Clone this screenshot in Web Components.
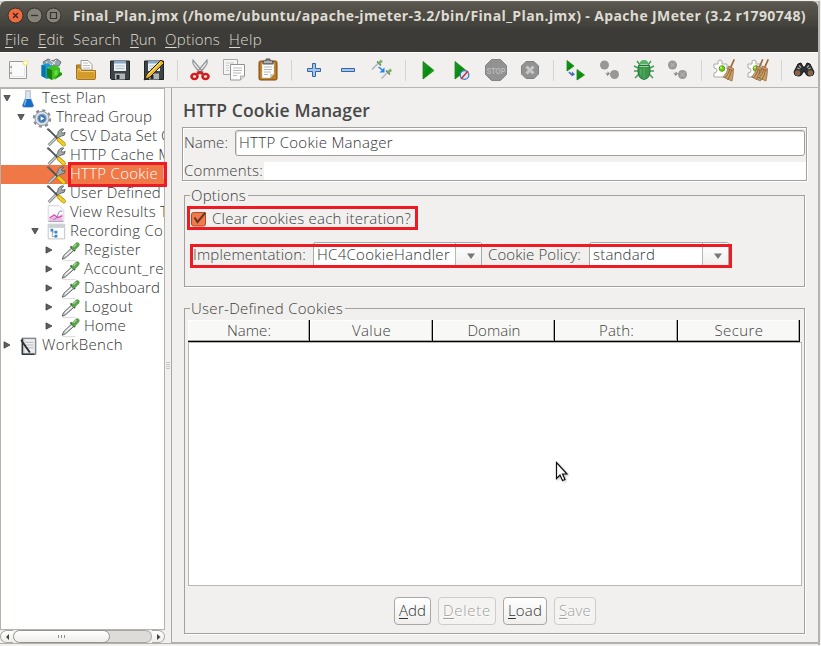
<!DOCTYPE html>
<html lang="en">
<head>
<meta charset="utf-8">
<title>Apache JMeter</title>
<style>
html,body{margin:0;padding:0;width:821px;height:646px;overflow:hidden;background:#f2f1f0}
body{font-family:"Open Sans","Noto Sans",sans-serif;font-size:15px;font-weight:360;color:#404040}
</style>
</head>
<body>
<jmeter-window></jmeter-window>
<script>
const define=(name,html,setup)=>customElements.define(name,class extends HTMLElement{
  connectedCallback(){
    if(this.shadowRoot)return;
    this.attachShadow({mode:'open'}).innerHTML=typeof html==='function'?html(this):html;
    if(setup)setup(this);
  }
});

/* Text whose letter spacing is tuned so that the sample occupies a given width. */
define('fit-text','<style>:host{display:inline-block;white-space:pre;line-height:20px}::slotted(u){text-decoration-thickness:1px;text-underline-offset:2px}</style><slot></slot>',el=>{
  const s=getComputedStyle(el),c=document.createElement('canvas').getContext('2d');
  c.font=`${s.fontWeight} ${s.fontSize} ${s.fontFamily}`;
  const t=el.getAttribute('of')||el.textContent;
  el.style.letterSpacing=((+el.getAttribute('w')-c.measureText(t).width)/t.length).toFixed(3)+'px';
});

const floppy='<path d="M2.500 3h19v18.500h-18l-1-1z" fill="#3d4448" stroke="#1f2427"/><path d="M6 3h12v10H6z" fill="#e9f0f6"/><path d="M6 3h12v2.500H6z" fill="#87aacb"/><path d="M7.500 8h9M7.500 10.500h9" stroke="#b3bdc6"/><path d="M7 15.500h10v6H7z" fill="#aeb3b5"/><path d="M8.500 17h3v4h-3z" fill="#262a2c"/>';
const broom='<path d="M21.500 1l1.500.7-4 9-1.500-.8z" fill="#9e6b38"/><path d="M16.500 8l5 2.500q0 6-1.500 12.500l-9-4q4.500-4 5.500-11z" fill="#c9a06a" stroke="#8c6436" stroke-width=".7"/><path d="M18 11q-2 6-5 9M19.500 12q-1 6-4 10" stroke="#805a2e" stroke-width=".8" fill="none"/><path d="M15.700 10.500l5 2" stroke="#a6583c" stroke-width="1"/>';
const cog='<path d="M2 6h4q-1-4 2-4t2 4h5v5q4-1 4 2t-4 2v4H2v-4q3 0 3-2.500T2 10z" fill="#fff" stroke="#aaa" stroke-width="1"/><circle cx="10" cy="10.500" r="2.800" fill="#73cd18" stroke="#519b10"/><circle cx="9" cy="9.500" r="1" fill="#caff7a"/>';
const arrow='<path d="M5 14q1.500 2.500 4 2.500" stroke="#4b82c3" stroke-width="1.800" fill="none"/><path d="M8 13.500l3 3-3.500 2z" fill="#3971b7"/>';
const icons={
new:'<path d="M3.500 3.500h17v17h-17z" fill="#fafafa" stroke="#999"/><path d="M5.500 6v12.500h13V9" fill="none" stroke="#e6e6e6"/><path d="M5 8v2M5 14v2" stroke="#777"/><circle cx="19.500" cy="5" r="2.800" fill="#f5e983"/><circle cx="19.500" cy="5" r="1.400" fill="#fff"/>',
templates:'<path d="M3 4l5-3 4 2 5-2 4 3-2 4H5z" fill="#98a4ab" stroke="#68747b"/><path d="M6 4l5 3M10 2l5 4M16 2l-4 5" stroke="#e7edf0"/><path d="M1.500 7l7-2 3 3v12l-5 1-5-3z" fill="#1b99d3"/><path d="M1.500 7l4 1v12l-4-2z" fill="#0874a9"/><path d="M7 10l2-1v4l-2 1z" fill="#c8ecff"/><path d="M7 10l8-3 5 3v8l-8 4-5-3z" fill="#3fbd25"/><path d="M7 10l5 2v10l-5-3z" fill="#16830c"/><path d="M14.500 13l3-1v5l-3 1z" fill="#6be03c"/><path d="M20 14l2 1v2l-8 5z" fill="#219414"/>',
open:'<path d="M2.500 10V7h5l2 3" fill="#ca8f20" stroke="#9c6a12"/><path d="M7 2.500h7l4 4V12H7z" fill="#fff" stroke="#999"/><path d="M9 5h5M9 7.500h7M9 10h7" stroke="#bbb"/><path d="M2.500 10h4l1 2.500h14v8q0 1-1.500 1H4q-1.500 0-1.500-1.500z" fill="#dba63e" stroke="#a5741d"/><path d="M4 14h16v6H4z" fill="#d39a2c"/><path d="M4 11h2l1 2.500h13v1" fill="none" stroke="#f5cb70"/>',
save:floppy,
saveas:floppy+'<path d="M19 2l3 3L8 19l-6 3 3-6z" fill="#e9b52e" stroke="#33270b"/><path d="M18 5L6 17" stroke="#fae288"/><path d="M2 22l1.500-3 1.500 1.500z" fill="#222"/>',
cut:'<path d="M5 2Q4 6 8 10l5 6 2-2zM19 2q1 4-3 8l-5 6-2-2z" fill="#e8e9e8" stroke="#92979a" stroke-width="1.200"/><ellipse cx="6.500" cy="18.500" rx="3" ry="2.500" fill="none" stroke="#d51c1c" stroke-width="2.600"/><ellipse cx="17.500" cy="18.500" rx="3" ry="2.500" fill="none" stroke="#d51c1c" stroke-width="2.600"/><path d="M9 16l3-2 3 2" stroke="#d51c1c" stroke-width="2.500" fill="none"/>',
copy:'<g stroke="#aaa"><path d="M1.500 1.500h14v15h-14z" fill="#f5f5f4"/><path d="M4 5h8M4 7.500h3M4 10h3M4 12.500h3" stroke="#c8c8c8"/><path d="M8.500 6.500h14v11.500l-4 4h-10z" fill="#fff" stroke="#939393"/><path d="M11 10h9M11 12.500h9M11 15h8M11 17.500h4" stroke="#bbb"/><path d="M18.500 22v-4h4" fill="#ddd"/></g>',
paste:'<rect x="3" y="3" width="18" height="19" rx="1.500" fill="#bd7d1e" stroke="#78480c"/><path d="M6 5h12v11l-4 4H6z" fill="#fff" stroke="#bbb" stroke-width=".6"/><path d="M8 9h8M8 11.500h8M8 14h7M8 16.500h4" stroke="#b2b2b2"/><path d="M14 20v-4h4" fill="#ccc"/><path d="M7 6V3h3V1h4v2h3v3z" fill="#888" stroke="#555"/><path d="M8 4h8" stroke="#ddd"/>',
plus:'<path d="M10.500 5.500h3v5h5v3h-5v5h-3v-5h-5v-3h5z" fill="#a5c6eb" stroke="#3465a4"/>',
minus:'<path d="M5.500 10.500h13v3h-13z" fill="#a5c6eb" stroke="#3465a4"/>',
toggle:'<path d="M2 11.500l6-6" stroke="#b4b9b7" stroke-width="1.700"/><path d="M7 3.500l4 4" stroke="#4d7648" stroke-width="1.100"/><path d="M8.800 5.500l3-3" stroke="#79b46a" stroke-width="2.800"/><path d="M11.500 20.500l6-6" stroke="#b9bdbc" stroke-width="1.700"/><path d="M16 12.500l4 4" stroke="#4d7648" stroke-width="1.100"/><path d="M18.200 14.200l3-2.500" stroke="#79b36a" stroke-width="2.800"/><path d="M8.500 9l4 3" stroke="#2384ee" stroke-width="1.500"/><path d="M14.500 9.500v5H9.500z" fill="#2384ee"/>',
play:'<path d="M7 3.500L18 12.500 7 21z" fill="url(#pg)" stroke="#14850f" stroke-width=".8"/>',
playx:'<path d="M5 3.500L16 12.500 5 21z" fill="url(#pg)" stroke="#14850f" stroke-width=".8"/><circle cx="14.500" cy="17" r="4.300" fill="#d8e8fa" stroke="#397bc2" stroke-width="1.300"/><path d="M11 21l7-8" stroke="#e32424" stroke-width="1.500"/>',
stop:'<path d="M7.500 1.500h9l6 6v9l-6 6h-9l-6-6v-9z" fill="#929292" stroke="#858585"/><text x="12" y="15.600" text-anchor="middle" textLength="19" lengthAdjust="spacingAndGlyphs" font-family="Liberation Sans" font-weight="bold" font-size="9.500" fill="#bababa">STOP</text>',
shutdown:'<path d="M8 3.500h8l4.500 4.500v8L16 20.500H8L3.500 16V8z" fill="#929292" stroke="#808080"/><path d="M8.500 8.500l7 7m0-7l-7 7" stroke="#c6c6c6" stroke-width="3"/>',
rstart:'<path d="M3 2.500l7 5.500-7 5z" fill="url(#pg)" stroke="#14850f" stroke-width=".8"/><path d="M13 11.500l7.500 5.500-7.500 5z" fill="url(#pg)" stroke="#14850f" stroke-width=".8"/>'+arrow,
rstop:'<circle cx="6.500" cy="7" r="4.500" fill="#979797"/><circle cx="16.500" cy="16.500" r="4.500" fill="#979797"/><path d="M6.500 13.500q1 2 3 2v-2l2.500 2-2.500 2.500" fill="#888"/>',
bug:'<path d="M5 3l3 4M19 3l-3 4M2 8l4 2M22 8l-4 2M2 13h5M22 13h-5M3 20l4-4M21 20l-4-4" stroke="#4b995b" stroke-width="1.500"/><path d="M7.500 6.500q0-4.500 4.500-4.500t4.500 4.500z" fill="#5bb268"/><path d="M6.500 7.500h11q2.500 13-5.500 14Q4 20.500 6.500 7.500z" fill="#3c964d" stroke="#23763a"/><path d="M7.500 8.500h9" stroke="#8ed993"/><path d="M12 10v11" stroke="#65b36c" stroke-width=".8"/><path d="M9 11v6" stroke="#57a962" stroke-width="1.500"/>',
rshut:'<circle cx="6.500" cy="7" r="4.500" fill="#979797"/><circle cx="16.500" cy="16.500" r="4.500" fill="#979797"/><path d="M4.500 5l4 4m0-4l-4 4M14.500 14.500l4 4m0-4l-4 4" stroke="#b0b0b0" stroke-width="1.300"/><path d="M6.500 13.500q1 2 3 2v-2l2.500 2-2.500 2.500" fill="#888"/>',
clear:cog+broom,
clearall:cog+'<g transform="translate(-5.500)">'+broom+'</g>'+broom,
search:'<path d="M6 6l3-1 2 4h2l2-4 3 1 4 8q0 4-4 4-4.500 0-4.500-4h-3q0 4-4.500 4-4 0-4-4z" fill="#303030" stroke="#151515"/><circle cx="5.500" cy="15" r="2.300" fill="#a75a29" stroke="#777"/><circle cx="18.500" cy="15" r="2.300" fill="#a75a29" stroke="#777"/><path d="M7 7.500l2 2M17 7.500l-2 2M5 10l3 1M19 10l-3 1" stroke="#aaa" stroke-width="1.300"/>',
flask:'<path d="M9.500 3v7L6 19q0 2 2 2h8q2 0 2-2l-3.500-9V3z" fill="#dbe7f4" stroke="#a8b4c1"/><path d="M9 12h6l3 7q0 1.800-2 1.800H8q-2 0-2-1.800z" fill="#176fc5"/><path d="M10 12.500l-2 6.500" stroke="#79bcf5" stroke-width="1.500"/><path d="M9 3h6" stroke="#ccc" stroke-width="1.500"/>',
gear:'<circle cx="12" cy="12.500" r="9" fill="none" stroke="#858b91" stroke-width="2.200" stroke-dasharray="3.500 3.570"/><circle cx="12" cy="12.500" r="7.700" fill="#dfe2e5" stroke="#878d95"/><circle cx="12" cy="12.500" r="4.500" fill="#3e72b4" stroke="#7a9fc9" stroke-width="1.300"/><path d="M10.500 10l4 2.500-4 2.500z" fill="#fff"/>',
tools:'<path d="M13 12l-9 9" stroke="#666d70" stroke-width="3"/><path d="M13 12l-9 9" stroke="#ccd1d2" stroke-width="1.600"/><path d="M16 4.500q3-2.500 4.500-1l-2.500 2.500 1 2 3-1q0 4-4 4-2 0-4.500 3l-2-2q2.500-3 2.500-4 0-2.500 2-3.500z" fill="#a2a9aa" stroke="#50575a" stroke-width=".9"/><path d="M3.500 3.500l10 10" stroke="#484e50" stroke-width="1.800"/><path d="M2.500 3l3.500 3" stroke="#666" stroke-width="2.300"/><path d="M15 15l5.500 5" stroke="#9c830a" stroke-width="4.400" stroke-linecap="round"/><path d="M15 15l5.500 5" stroke="#f3ce1b" stroke-width="3.200" stroke-linecap="round"/>',
chart:'<path d="M3.500 4v17h17V9l-5-5z" fill="#fbfbfd" stroke="#d2d2dc"/><path d="M5 20v-3l5-4 4 3 5-3v7z" fill="#f2b8df"/><path d="M5 17.500l5-3.500 4 3 5-2" stroke="#da48ae" fill="none" stroke-width="1.200"/><path d="M9 19q4 0 5-5t5-4" stroke="#6682cc" fill="none"/><path d="M4 21h16" stroke="#aa78b0"/>',
recording:'<path d="M3.500 3.500h18v16h-18z" fill="#fff" stroke="#bcbdc0"/><path d="M4 4h17v3.500H4z" fill="#ccd0d5"/><path d="M8 9v8h4M8 12h4" stroke="#999" fill="none"/><path d="M6 8.500h3v3H6zM10.500 10.500h3v3h-3zM10.500 15h3v3h-3z" fill="#3685d1"/>',
dropper:'<path d="M3.500 21l1.500-4 8.500-8 2.500 2.500-9 8z" fill="#c9cecc" stroke="#555c5b"/><path d="M7 17l8-7" stroke="#fff" stroke-width="1.200"/><path d="M12.500 7l5 5" stroke="#386a30" stroke-width="2"/><path d="M16.500 8.500l3.500-3.500" stroke="#5ba24e" stroke-width="5" stroke-linecap="round"/><path d="M16 7.500l3-3" stroke="#a5dc92" stroke-width="1.500"/><path d="M4 22.500h14" stroke="#ccc" stroke-width=".8"/>',
workbench:'<path d="M5.500 3.500h15v17.500h-15z" fill="#d8dcdf" stroke="#555b5f"/><path d="M9 5h10v14H9z" fill="#eceef0"/><path d="M9 8h9M9 11h9M9 14h9" stroke="#b0b5b8"/><path d="M4.500 5.500L14 19" stroke="#252a2d" stroke-width="2"/><path d="M6 4v17h13" stroke="#303538" stroke-width="1.500"/>'
};
define('app-icon',el=>`<style>:host{display:block;flex:none;width:24px;height:24px}svg{display:block;width:100%;height:100%}</style>
<svg viewBox="0 0 24 24" fill="none"><defs><linearGradient id="pg" x2="1" y2="1"><stop stop-color="#23963a"/><stop offset=".55" stop-color="#078a0a"/><stop offset="1" stop-color="#4be92c"/></linearGradient></defs>${icons[el.getAttribute('name')]}</svg>`);

define('title-bar',`<style>:host{display:flex;align-items:center;height:27px;margin-top:1px;padding-left:7px;background:linear-gradient(#5a584f,#403f3a);border-radius:6px 6px 0 0;border-top:1px solid #6b695f;box-sizing:border-box;color:#dfdbd2;font-weight:700;font-size:14px}
svg{display:block;width:17px;height:17px;margin-right:2px;flex:none}fit-text{margin-left:9px;padding-top:1px}</style>
<svg viewBox="0 0 17 17"><circle cx="8.500" cy="8.500" r="7.500" fill="#ed6b43" stroke="#33302b"/><path d="M6 6l5 5m0-5l-5 5" stroke="#402018" stroke-width="1.400"/></svg>
<svg viewBox="0 0 17 17"><circle cx="8.500" cy="8.500" r="7.500" fill="#858279" stroke="#33302b"/><path d="M5 8.500h7" stroke="#35342f" stroke-width="1.300"/></svg>
<svg viewBox="0 0 17 17"><circle cx="8.500" cy="8.500" r="7.500" fill="#858279" stroke="#33302b"/><path d="M5.500 5.500h6v6h-6z" fill="none" stroke="#35342f" stroke-width="1.200"/></svg>
<fit-text w="733">Final_Plan.jmx (/home/ubuntu/apache-jmeter-3.2/bin/Final_Plan.jmx) - Apache JMeter (3.2 r1790748)</fit-text>`);

define('menu-bar',`<style>:host{display:flex;align-items:center;height:24px;box-sizing:border-box;background:#3c3b37;color:#dfdbd2;padding:0 0 3px 5px;gap:9px}</style>
<fit-text w="24"><u>F</u>ile</fit-text><fit-text w="26"><u>E</u>dit</fit-text><fit-text w="48">Search</fit-text><fit-text w="26"><u>R</u>un</fit-text><fit-text w="55"><u>O</u>ptions</fit-text><fit-text w="33"><u>H</u>elp</fit-text>`);

define('tool-bar',`<style>:host{display:flex;align-items:center;height:35px;padding-left:1px;box-sizing:border-box;border-top:1px solid #fff}app-icon{margin:0 5px}i{flex:none;width:1px;height:21px;margin:0 5px 0 6px;background:#d5d3d1}</style>`+
'new templates open save saveas | cut copy paste | plus minus toggle | play playx stop shutdown | rstart rstop bug rshut | clear clearall | search'.split(' ').map(n=>n==='|'?'<i></i>':`<app-icon name="${n}"></app-icon>`).join(''));

/* level: indentation depth; open: yes / no / leaf */
define('tree-row',el=>{
  const lv=+el.getAttribute('level'),o=el.getAttribute('open');
  const tri=o==='yes'?'<path d="M.8 1.500h6.400L4 7z"/>':o==='no'?'<path d="M1 .8v6.400L7 4z"/>':'';
  return `<style>:host{display:flex;align-items:center;height:19px;box-sizing:border-box;padding-left:${2+lv*14}px;color:#333}
:host([selected]){background:#f07746;color:#fff}svg{flex:none;width:8px;height:8px;margin:0 5px 2px 0}app-icon{width:22px;height:22px;margin-right:3px;margin-left:1px}::slotted(*){padding-bottom:4px}</style>
<svg viewBox="0 0 8 8" fill="#606060" stroke="#333" stroke-width=".7">${tri}</svg><app-icon name="${el.getAttribute('icon')}"></app-icon><slot></slot>`});

define('scroll-bar',`<style>:host{display:grid;grid-template-columns:13px 97px 42px 13px;height:13px;position:relative}div{box-sizing:border-box;height:13px;border:1px solid #aaa7a3;background:linear-gradient(#fff,#eeedeb)}
.l{border-radius:7px 0 0 7px;border-right:0}.r{border-radius:0 7px 7px 0;border-left:0}.t{border-radius:7px;display:flex;gap:2px;align-items:center;justify-content:center;z-index:1;border-color:#96938f}.k{background:#dedcda;border-radius:0 7px 7px 0;margin-left:-7px;border-left:0}i{width:1px;height:3px;background:#8e8e8e}svg{display:block;width:11px;height:11px}</style>
<div class="l"><svg viewBox="0 0 11 11"><path d="M8 3v6L5 6z" fill="#444"/></svg></div><div class="t"><i></i><i></i><i></i></div><div class="k"></div><div class="r"><svg viewBox="0 0 11 11"><path d="M5 3v6l3.500-3z" fill="#444"/></svg></div>`);

define('plan-tree',()=>{
  const rows=[[0,'yes','flask','Test Plan',64],[1,'yes','gear','Thread Group',96],[2,'','tools','CSV Data Set C',87,'CSV Data Set'],[2,'','tools','HTTP Cache M',84,'HTTP Cache'],[2,'','tools','HTTP Cookie M',88,'HTTP Cookie'],[2,'','tools','User Defined',91],[2,'','chart','View Results T',86,'View Results'],[2,'yes','recording','Recording Con',93,'Recording Co'],[3,'no','dropper','Register',57],[3,'no','dropper','Account_re',80],[3,'no','dropper','Dashboard',76],[3,'no','dropper','Logout',49],[3,'no','dropper','Home',42],[0,'no','workbench','WorkBench',81]];
  return `<style>:host{display:flex;flex-direction:column;width:165px}.v{height:543px;box-sizing:border-box;border:1px solid #b6b3ae;background:#fff;overflow:hidden}</style><div class="v">`+
  rows.map(r=>`<tree-row level="${r[0]}" open="${r[1]||'leaf'}" icon="${r[2]}" ${r[3].startsWith('HTTP Cookie')?'selected':''}><fit-text w="${r[4]}" of="${r[5]||r[3]}">${r[3]}</fit-text></tree-row>`).join('')+'</div><scroll-bar></scroll-bar>'});

define('group-box',`<style>:host{display:block;box-sizing:border-box}fieldset{margin:0;padding:0;border:1px solid #a3a19e;box-shadow:1px 1px #fff;box-sizing:border-box;height:100%;min-width:0}legend{height:20px;padding:0 2px 0 1px;margin-left:5px;color:#3c3c3c;font-size:15px}</style><fieldset><legend><slot name="label"></slot></legend><slot></slot></fieldset>`);

define('name-panel',`<style>:host{display:block;box-sizing:border-box;width:625px;height:54px;border:1px solid #a3a19e;box-shadow:1px 1px #fff,inset 1px 1px #fff}
div{display:flex;align-items:center}.a{height:29px}.b{height:23px}fit-text{margin-left:1px;padding-bottom:1px}.b fit-text{padding:3px 0 0}.f fit-text{padding-bottom:2px}.f{box-sizing:border-box;width:570px;height:26px;margin-left:7px;margin-top:1px;border:1px solid #a09e9b;border-radius:3px;background:#fff;padding-left:2px;box-shadow:inset 1px 1px #dedcda;color:#333}.g{align-self:flex-end;flex:1;height:18px;background:#fff;margin-left:1px}</style>
<div class="a"><fit-text w="44">Name:</fit-text><div class="f"><fit-text w="154">HTTP Cookie Manager</fit-text></div></div><div class="b"><fit-text w="79">Comments:</fit-text><div class="g"></div></div>`);

define('combo-box',el=>`<style>:host{display:grid;grid-template-columns:1fr 26px;box-sizing:border-box;height:25px;border:1px solid #aaa8a5;border-bottom:0;border-radius:3px 3px 0 0;background:#fff;color:#333;width:${el.getAttribute('width')}px}
.t{padding:1px 0 0 3px}.b{border-left:1px solid #b9b7b4;background:linear-gradient(#fff,#ededec);display:flex;align-items:center;justify-content:center}svg{width:8px;height:6px;margin-top:3px;margin-left:4px}</style><div class="t"><slot></slot></div><div class="b"><svg viewBox="0 0 8 6"><path d="M0 .5h8L4 6z" fill="#777"/></svg></div>`);

define('check-box',`<style>:host{display:flex;align-items:center;gap:5px}svg{width:16px;height:16px;margin-top:1px}</style><svg viewBox="0 0 16 16"><rect x=".5" y="1.500" width="14" height="13.500" rx="2" fill="#f07a4c" stroke="#a94d29"/><path d="M3.500 6.500l3 4.500L14.500 1.500" fill="none" stroke="#6b3522" stroke-width="2"/></svg><slot></slot>`);

define('cookie-table',()=>`<style>:host{display:block;width:614px}.h{display:grid;grid-template-columns:122px 123px 122px 123px 122px;height:22px}.h div{box-sizing:border-box;text-align:center;padding-left:1px;background:#f8f8f6;border-right:1px solid #000;border-bottom:1px solid #000;box-shadow:inset -1px -1px #aaa,inset 1px 1px #fff}.v{box-sizing:border-box;height:244px;background:#fff;border:1px solid #b8b6b3}</style><div class="h">`+
 [['Name:',44],['Value',39],['Domain',53],['Path:',35],['Secure',49]].map(r=>`<div><fit-text w="${r[1]}">${r[0]}</fit-text></div>`).join('')+'</div><div class="v"></div>');

define('push-button',el=>`<style>:host{display:flex;align-items:center;justify-content:center;box-sizing:border-box;height:28px;padding-bottom:2px;width:${el.getAttribute('width')}px;border:1px solid #aaa8a5;border-radius:4px;background:linear-gradient(#fff,#efeeed);color:#333}:host([disabled]){border-color:#cecccb;color:#a09e9b;background:#f4f3f2;text-shadow:1px 1px #fff}</style><slot></slot>`);

define('cookie-manager',`<style>:host{display:block;box-sizing:border-box;width:647px;height:556px;border-left:1px solid #aaa8a4;border-bottom:2px solid #b2b0ad;padding-left:11px}
h1{margin:0;font:600 17.500px "Open Sans",sans-serif;height:39px;padding-top:10px;box-sizing:border-box;color:#484848}
name-panel{margin-left:-1px}.o{width:621px;height:102px;margin:4px 0 0 1px}.u{width:621px;height:336px;margin:11px 0 0 1px}
check-box{margin:3px 0 0 6px;height:20px}.r{display:flex;align-items:center;margin:13px 0 0 8px;height:26px}.r combo-box{margin-left:7px}.r>fit-text{padding-bottom:1px}.r .p{margin-left:6px}.r .c{margin-left:8px}
cookie-table{margin:2px 0 0 3px}.b{display:flex;gap:7px;margin:11px 0 0 209px}</style>
<h1><fit-text w="187">HTTP Cookie Manager</fit-text></h1><name-panel></name-panel>
<group-box class="o"><fit-text slot="label" w="55">Options</fit-text><check-box><fit-text w="199">Clear cookies each iteration?</fit-text></check-box>
<div class="r"><fit-text w="113">Implementation:</fit-text><combo-box width="169"><fit-text w="133">HC4CookieHandler</fit-text></combo-box><fit-text class="p" w="93">Cookie Policy:</fit-text><combo-box class="c" width="140"><fit-text w="62">standard</fit-text></combo-box></div></group-box>
<group-box class="u"><fit-text slot="label" w="152">User-Defined Cookies</fit-text><cookie-table></cookie-table>
<div class="b"><push-button width="37"><fit-text w="27"><u>A</u>dd</fit-text></push-button><push-button width="58" disabled><fit-text w="48"><u>D</u>elete</fit-text></push-button><push-button width="44"><fit-text w="34"><u>L</u>oad</fit-text></push-button><push-button width="42" disabled><fit-text w="32"><u>S</u>ave</fit-text></push-button></div></group-box>`);

define('red-mark','<style>:host{position:absolute;box-sizing:border-box;border:3px solid #ed1c24;z-index:3}</style>');
define('mouse-pointer','<style>:host{position:absolute;left:555px;top:461px;width:14px;height:22px;z-index:3;filter:drop-shadow(1px 1px 1px #bbb)}svg{display:block}</style><svg width="14" height="22"><path d="M1.500 1.500v16l3.500-3.500 2.500 5.500 2.500-1-2.500-5.500h4.500z" fill="#fff" stroke="#111" stroke-width="1.200"/></svg>');

define('jmeter-window',`<style>:host{display:block;position:relative;width:821px;height:646px;overflow:hidden;background:#f2f1f0}
.w{width:820px;height:644px;background:#f1f0ee;border-right:2px solid #b6b4b1;box-sizing:border-box}.top{background:linear-gradient(#c9c8c5 0 2px,#f2f1f0 2px);padding-top:.01px}
.m{display:grid;grid-template-columns:171px 647px;height:556px;border-top:1px solid #b9b6b2;box-sizing:border-box;width:818px}.l{display:flex;border-bottom:1px solid #b2b0ad;height:555px}
.g{display:grid;gap:1px;align-self:center;margin-left:1px;width:4px}.g i{height:1px;background:#c8c5c1}</style>
<div class="w"><div class="top"><title-bar></title-bar></div><menu-bar></menu-bar><tool-bar></tool-bar><div class="m"><div class="l"><plan-tree></plan-tree><div class="g"><i></i><i></i><i></i><i></i></div></div><cookie-manager></cookie-manager></div></div>
<red-mark style="left:68px;top:162px;width:99px;height:25px"></red-mark><red-mark style="left:187px;top:206px;width:231px;height:24px"></red-mark><red-mark style="left:190px;top:244px;width:542px;height:24px"></red-mark><mouse-pointer></mouse-pointer>`);
</script>
</body>
</html>
